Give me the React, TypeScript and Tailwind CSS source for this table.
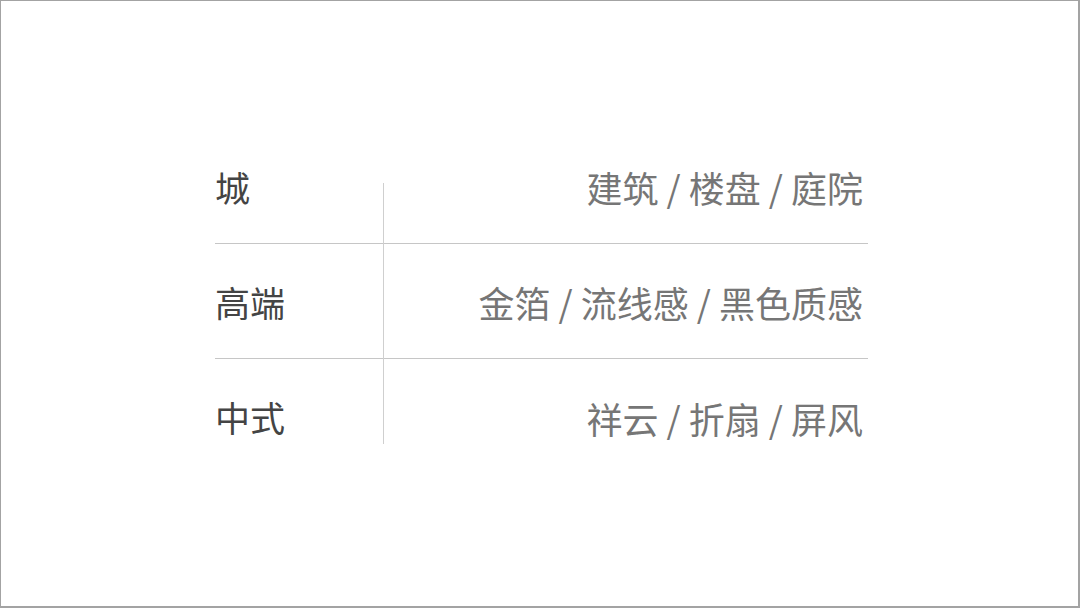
const rows = [
  { label: '城', tags: '建筑 / 楼盘 / 庭院' },
  { label: '高端', tags: '金箔 / 流线感 / 黑色质感' },
  { label: '中式', tags: '祥云 / 折扇 / 屏风' },
];

export default function App() {
  return (
    <div
      className="w-[1080px] h-[608px] bg-white border-t border-l border-r-2 border-b-2 border-[#a3a3a3] overflow-hidden"
      style={{ fontFamily: '"Noto Sans CJK SC", "Noto Sans", sans-serif' }}
    >
      <div className="relative ml-[214px] mt-[128px] w-[653px]">
        {rows.map((row, i) => (
          <div
            key={row.label}
            className={`flex h-[115px] items-center justify-between ${
              i < rows.length - 1 ? 'border-b border-[#c6c6c6]' : ''
            }`}
          >
            <span className="text-[35px] leading-none text-[#444444]">{row.label}</span>
            <span className="pr-[5px] pt-[2px] text-[36px] leading-none text-[#767676]">
              {row.tags}
            </span>
          </div>
        ))}
        {/* vertical divider */}
        <div className="absolute left-[168px] top-[54px] h-[261px] w-px bg-[#cfcfcf]" />
      </div>
    </div>
  );
}
